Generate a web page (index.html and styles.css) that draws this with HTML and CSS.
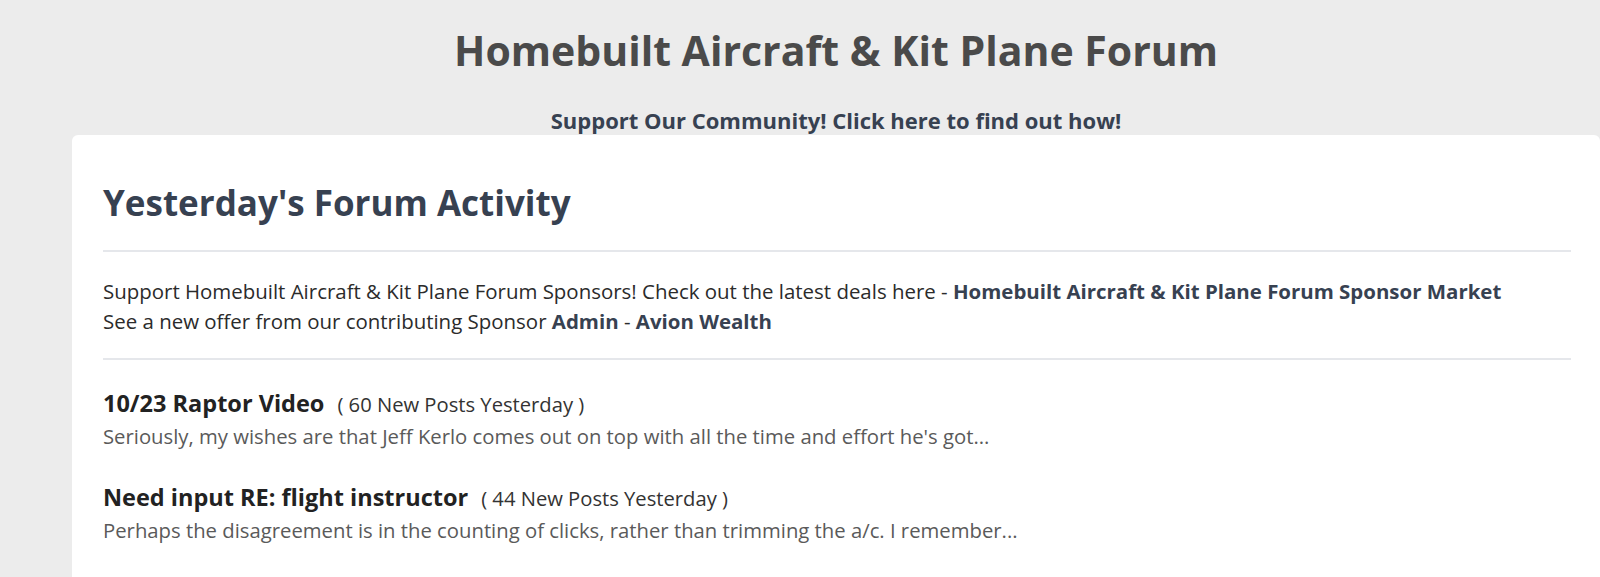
FILE: index.html
```html
<!DOCTYPE html>
<html>
<head>
<meta charset="utf-8">
<link rel="stylesheet" href="styles.css">
</head>
<body>
<div class="page">
  <header class="site-head">
    <h1 class="site-title">Homebuilt Aircraft &amp; Kit Plane Forum</h1>
    <a class="support-link" href="#">Support Our Community! Click here to find out how!</a>
  </header>
  <main class="card">
    <h2 class="card-title">Yesterday's Forum Activity</h2>
    <hr class="rule">
    <div class="sponsors">
      <p>Support Homebuilt Aircraft &amp; Kit Plane Forum Sponsors! Check out the latest deals here - <a href="#">Homebuilt Aircraft &amp; Kit Plane Forum Sponsor Market</a></p>
      <p>See a new offer from our contributing Sponsor <a href="#">Admin</a> - <a href="#">Avion Wealth</a></p>
    </div>
    <hr class="rule">
    <ul class="threads">
      <li class="thread">
        <div class="thread-head"><a class="thread-title" href="#">10/23 Raptor Video</a><span class="thread-count">( 60 New Posts Yesterday )</span></div>
        <p class="thread-excerpt">Seriously, my wishes are that Jeff Kerlo comes out on top with all the time and effort he's got...</p>
      </li>
      <li class="thread">
        <div class="thread-head"><a class="thread-title" href="#">Need input RE: flight instructor</a><span class="thread-count">( 44 New Posts Yesterday )</span></div>
        <p class="thread-excerpt">Perhaps the disagreement is in the counting of clicks, rather than trimming the a/c. I remember...</p>
      </li>
    </ul>
  </main>
</div>
</body>
</html>
```

FILE: styles.css
```css
html, body {
  margin: 0;
  padding: 0;
}
body {
  background: #ececec;
  font-family: "Open Sans", "Noto Sans", sans-serif;
  color: #333;
  overflow: hidden;
}
a {
  text-decoration: none;
}
.page {
  margin-left: 72px;
  width: 1528px;
}
.site-head {
  display: flex;
  flex-direction: column;
  align-items: center;
  padding-top: 23px;
}
.site-title {
  margin: 0;
  font-size: 41px;
  line-height: 54px;
  font-weight: 700;
  color: #4a4a4a;
}
.support-link {
  margin-top: 28px;
  font-size: 22px;
  line-height: 30px;
  font-weight: 700;
  color: #374151;
}
.card {
  background: #fff;
  border-radius: 6px 6px 0 0;
  padding: 43px 29px 40px 31px;
  min-height: 500px;
}
.card-title {
  margin: 0 0 22px;
  font-size: 35px;
  line-height: 50px;
  font-weight: 700;
  color: #374151;
}
.rule {
  border: 0;
  border-top: 2px solid #e5e7eb;
  margin: 0;
}
.sponsors {
  padding: 24px 0 22px;
}
.sponsors p {
  margin: 0;
  font-size: 20.45px;
  line-height: 30px;
  color: #2b2b2b;
}
.sponsors a {
  font-weight: 700;
  color: #374151;
}
.threads {
  list-style: none;
  margin: 0;
  padding: 26px 0 0;
}
.thread {
  margin-bottom: 28px;
}
.thread-head {
  display: flex;
  align-items: baseline;
  gap: 13px;
}
.thread-title {
  font-size: 23.5px;
  line-height: 34px;
  font-weight: 700;
  color: #222;
}
.thread-count {
  font-size: 20.2px;
  color: #333;
}
.thread-excerpt {
  margin: 0;
  font-size: 20.3px;
  line-height: 32px;
  color: #5a5a5a;
}
```
